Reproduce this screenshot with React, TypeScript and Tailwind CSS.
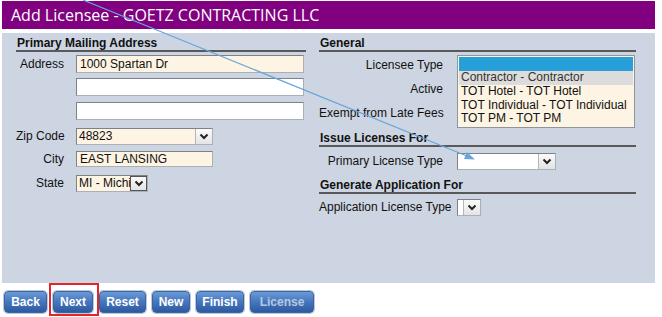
import React from 'react';

const font = { fontFamily: '"Liberation Sans", Arial, sans-serif' };

function Chevron() {
  return (
    <svg width="10" height="7" viewBox="0 0 10 7">
      <polyline points="1.5,1.5 5,5 8.5,1.5" fill="none" stroke="#222" strokeWidth="2" />
    </svg>
  );
}

function TextBox({ value, cream = true, width, height = 18 }: { value?: string; cream?: boolean; width: number; height?: number }) {
  return (
    <div
      className={`flex items-center border border-[#a9b0b8] border-t-[#7d8288] border-l-[#7d8288] pl-[3px] text-[12px] text-[#111] ${cream ? 'bg-[#fdf4e3]' : 'bg-white'}`}
      style={{ width, height }}
    >
      {value}
    </div>
  );
}

function SelectBox({ value, width, height = 17, cream = true, btnDark = false }: { value?: string; width: number; height?: number; cream?: boolean; btnDark?: boolean }) {
  return (
    <div
      className={`flex border border-[#a9b0b8] border-t-[#7d8288] border-l-[#7d8288] text-[12px] text-[#111] ${cream ? 'bg-[#fdf4e3]' : 'bg-white'}`}
      style={{ width, height }}
    >
      <div className="flex-1 overflow-hidden whitespace-nowrap pl-[2px] leading-[15px]">{value}</div>
      <div
        className={`flex w-[17px] items-center justify-center bg-gradient-to-b from-[#fbfbfb] to-[#e4e4e4] border-l ${btnDark ? 'border border-[#555]' : 'border-[#b5b5b5]'}`}
      >
        <Chevron />
      </div>
    </div>
  );
}

function SectionHeader({ title }: { title: string }) {
  return (
    <div className="h-[16px] border-b-2 border-[#595959] pl-[1px] text-[12px] font-bold leading-[14px] text-[#111]">
      {title}
    </div>
  );
}

function Btn({ label, width, disabled = false }: { label: string; width: number; disabled?: boolean }) {
  return (
    <div
      className={`flex h-[22px] items-center justify-center rounded-[4px] border border-[#3b65a0] bg-gradient-to-b from-[#6b9ad6] via-[#4576bd] to-[#2d5a9f] text-[12px] font-bold shadow-[0_0_0_1px_#b9c8dc] ${disabled ? 'text-[#b8c7de]' : 'text-white'}`}
      style={{ width }}
    >
      {label}
    </div>
  );
}

export default function App() {
  return (
    <div className="relative h-[317px] w-[662px] overflow-hidden bg-white" style={font}>
      <div className="mx-[2px] mt-[1px] flex h-[28px] w-[653px] items-center bg-[#800080] pl-[9px] text-[16px] text-white" style={{ fontFamily: '"Open Sans", sans-serif' }}>
        Add Licensee - GOETZ CONTRACTING LLC
      </div>

      <div className="mx-[2px] mt-[4px] flex h-[250px] w-[653px] gap-[13px] bg-[#cdd5e2] pl-[14px] pt-[3px] text-[12px] text-[#111]">
        <div className="w-[290px]">
          <SectionHeader title="Primary Mailing Address" />
          <div className="mt-[3px] flex items-center gap-[12px]">
            <div className="w-[48px] whitespace-nowrap text-right">Address</div>
            <TextBox value="1000 Spartan Dr" width={228} />
          </div>
          <div className="mt-[5px] flex pl-[60px]">
            <TextBox width={228} cream={false} />
          </div>
          <div className="mt-[6px] flex pl-[60px]">
            <TextBox width={228} cream={false} />
          </div>
          <div className="mt-[7px] flex items-center gap-[12px]">
            <div className="w-[48px] whitespace-nowrap text-right">Zip Code</div>
            <SelectBox value="48823" width={137} />
          </div>
          <div className="mt-[5px] flex items-center gap-[12px]">
            <div className="w-[48px] whitespace-nowrap text-right">City</div>
            <TextBox value="EAST LANSING" width={137} height={16} />
          </div>
          <div className="mt-[6px] flex items-center gap-[12px]">
            <div className="w-[48px] whitespace-nowrap text-right">State</div>
            <SelectBox value="MI - Michig" width={72} height={17} btnDark />
          </div>
        </div>

        <div className="w-[317px]">
          <SectionHeader title="General" />
          <div className="relative flex h-[25px] items-center gap-[14px]">
            <div className="w-[124px] whitespace-nowrap text-right">Licensee Type</div>
            <div className="absolute left-[138px] top-[3px] z-10 w-[178px] border border-[#8f959c] bg-[#fdf4e3] p-px text-[12px] leading-[13.5px]">
              <div className="h-[14px] bg-[#27a0d9]" />
              <div className="h-[14px] bg-[#dcdcdc] pl-[2px] text-[#333]">Contractor - Contractor</div>
              <div className="h-[13.5px] pl-[2px]">TOT Hotel - TOT Hotel</div>
              <div className="h-[13.5px] pl-[2px]">TOT Individual - TOT Individual</div>
              <div className="h-[13.5px] pl-[2px]">TOT PM - TOT PM</div>
            </div>
          </div>
          <div className="flex h-[24px] items-center gap-[14px]">
            <div className="w-[124px] whitespace-nowrap text-right">Active</div>
          </div>
          <div className="flex h-[24px] items-center gap-[14px]">
            <div className="w-[124px] whitespace-nowrap text-right">Exempt from Late Fees</div>
          </div>
          <div className="mt-[6px]">
            <SectionHeader title="Issue Licenses For" />
          </div>
          <div className="mt-[5px] flex items-center gap-[14px]">
            <div className="w-[124px] whitespace-nowrap text-right">Primary License Type</div>
            <SelectBox width={99} cream={false} />
          </div>
          <div className="mt-[8px]">
            <SectionHeader title="Generate Application For" />
          </div>
          <div className="mt-[4px] flex items-center gap-[14px]">
            <div className="w-[124px] whitespace-nowrap text-right">Application License Type</div>
            <SelectBox width={24} cream={false} />
          </div>
        </div>
      </div>

      <div className="mt-[8px] flex gap-[6px] pl-[4px]">
        <Btn label="Back" width={43} />
        <Btn label="Next" width={40} />
        <Btn label="Reset" width={47} />
        <Btn label="New" width={38} />
        <Btn label="Finish" width={48} />
        <Btn label="License" width={64} disabled />
      </div>

      <div className="absolute left-[49px] top-[283px] h-[33px] w-[50px] border-2 border-[#e0262b]" />

      <svg className="pointer-events-none absolute left-0 top-0" width="662" height="317">
        <line x1="83" y1="0" x2="468" y2="156.5" stroke="#6aa6dc" strokeWidth="1.2" />
        <polygon points="475,159.5 464,159 467,152" fill="#6aa6dc" />
      </svg>
    </div>
  );
}
